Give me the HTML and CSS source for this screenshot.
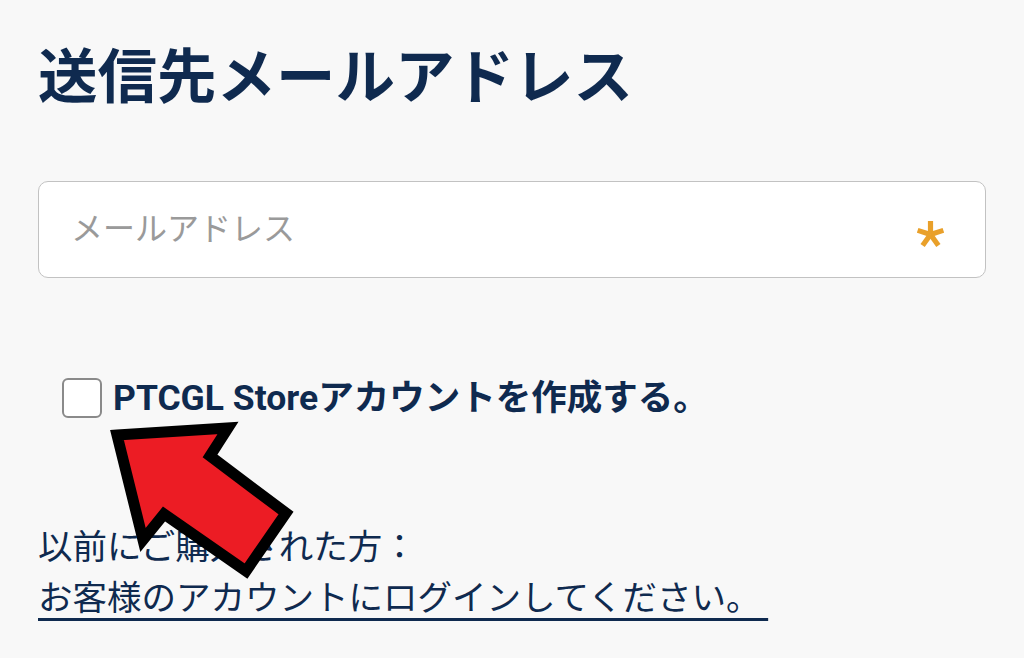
FILE: index.html
```html
<!DOCTYPE html>
<html lang="ja">
  <head>
    <meta charset="utf-8" />
    <title>送信先メールアドレス</title>
    <link rel="stylesheet" href="styles.css">
  </head>
  <body>
    <main class="page">
      <h1 class="title">送信先メールアドレス</h1>

      <label class="field">
        <input type="email" class="field-input" placeholder="メールアドレス" />
        <svg class="required" viewBox="0 0 26 26" aria-hidden="true">
          <g stroke="#e9a02a" stroke-width="5" stroke-linecap="butt">
            <line x1="13" y1="13" x2="13" y2="0" />
            <line x1="13" y1="13" x2="25.4" y2="9" />
            <line x1="13" y1="13" x2="20.6" y2="23.5" />
            <line x1="13" y1="13" x2="5.4" y2="23.5" />
            <line x1="13" y1="13" x2="0.6" y2="9" />
          </g>
        </svg>
      </label>

      <div class="check-row">
        <input type="checkbox" id="create" class="check" />
        <label for="create" class="check-label">PTCGL Storeアカウントを作成する。</label>
      </div>

      <div class="login">
        <p class="login-text">以前にご購入された方：</p>
        <a href="#" class="login-link">お客様のアカウントにログインしてください。&nbsp;</a>
      </div>

      <!-- annotation arrow drawn over the page -->
      <svg class="arrow" viewBox="0 0 1024 658" aria-hidden="true">
        <polygon
          points="117,435 228,428 210,456 286,513 246,571 164,514 143,540"
          fill="#ec1c24"
          stroke="#000"
          stroke-width="11"
          stroke-linejoin="miter"
        />
      </svg>
    </main>
  </body>
</html>
```

FILE: styles.css
```css
:root {
  --navy: #0f2a4f;
  --background: #f8f8f8;
}
html,
body {
  margin: 0;
  height: 100%;
  background-color: var(--background);
  color: var(--navy);
  font-family: Roboto, "Noto Sans CJK JP", sans-serif;
}
*,
*:before,
*:after {
  box-sizing: border-box;
}
.page {
  position: relative;
  height: 100%;
  padding: 36px 38px 0;
  display: flex;
  flex-direction: column;
  align-items: flex-start;
}
.title {
  margin: 0;
  font-family: "Noto Sans CJK JP", sans-serif;
  font-size: 59.5px;
  font-weight: 700;
  line-height: 72px;
}
.field {
  margin-top: 73px;
  width: 948px;
  height: 97px;
  display: flex;
  align-items: center;
  gap: 12px;
  padding: 0 41px 0 32px;
  background: #fff;
  border: 1.5px solid #c2c2c2;
  border-radius: 10px;
}
.field-input {
  flex: 1;
  border: 0;
  outline: none;
  background: transparent;
  padding: 0;
  margin: 0 0 8px;
  font-family: "Noto Sans CJK JP", sans-serif;
  font-size: 32px;
  color: var(--navy);
}
.field-input::placeholder {
  color: #9a9a9a;
}
.required {
  width: 27px;
  height: 27px;
  margin-top: 10px;
}
.check-row {
  margin-top: 100px;
  padding-left: 24px;
  height: 40px;
  display: flex;
  align-items: center;
  gap: 11px;
}
.check {
  appearance: none;
  margin: 0;
  width: 40px;
  height: 40px;
  background: #fff;
  border: 2.5px solid #8a8a8a;
  border-radius: 6px;
}
.check-label {
  font-size: 35.5px;
  font-weight: 700;
  line-height: 40px;
}
.login {
  margin-top: 101px;
  font-family: "Noto Sans CJK JP", sans-serif;
  font-size: 34.5px;
  line-height: 51px;
}
.login-text {
  margin: 0;
}
.login-link {
  color: var(--navy);
  text-decoration: underline;
  text-decoration-thickness: 3px;
  text-underline-offset: 8px;
}
.arrow {
  position: absolute;
  top: 0;
  left: 0;
  width: 1024px;
  height: 658px;
  pointer-events: none;
}
```
